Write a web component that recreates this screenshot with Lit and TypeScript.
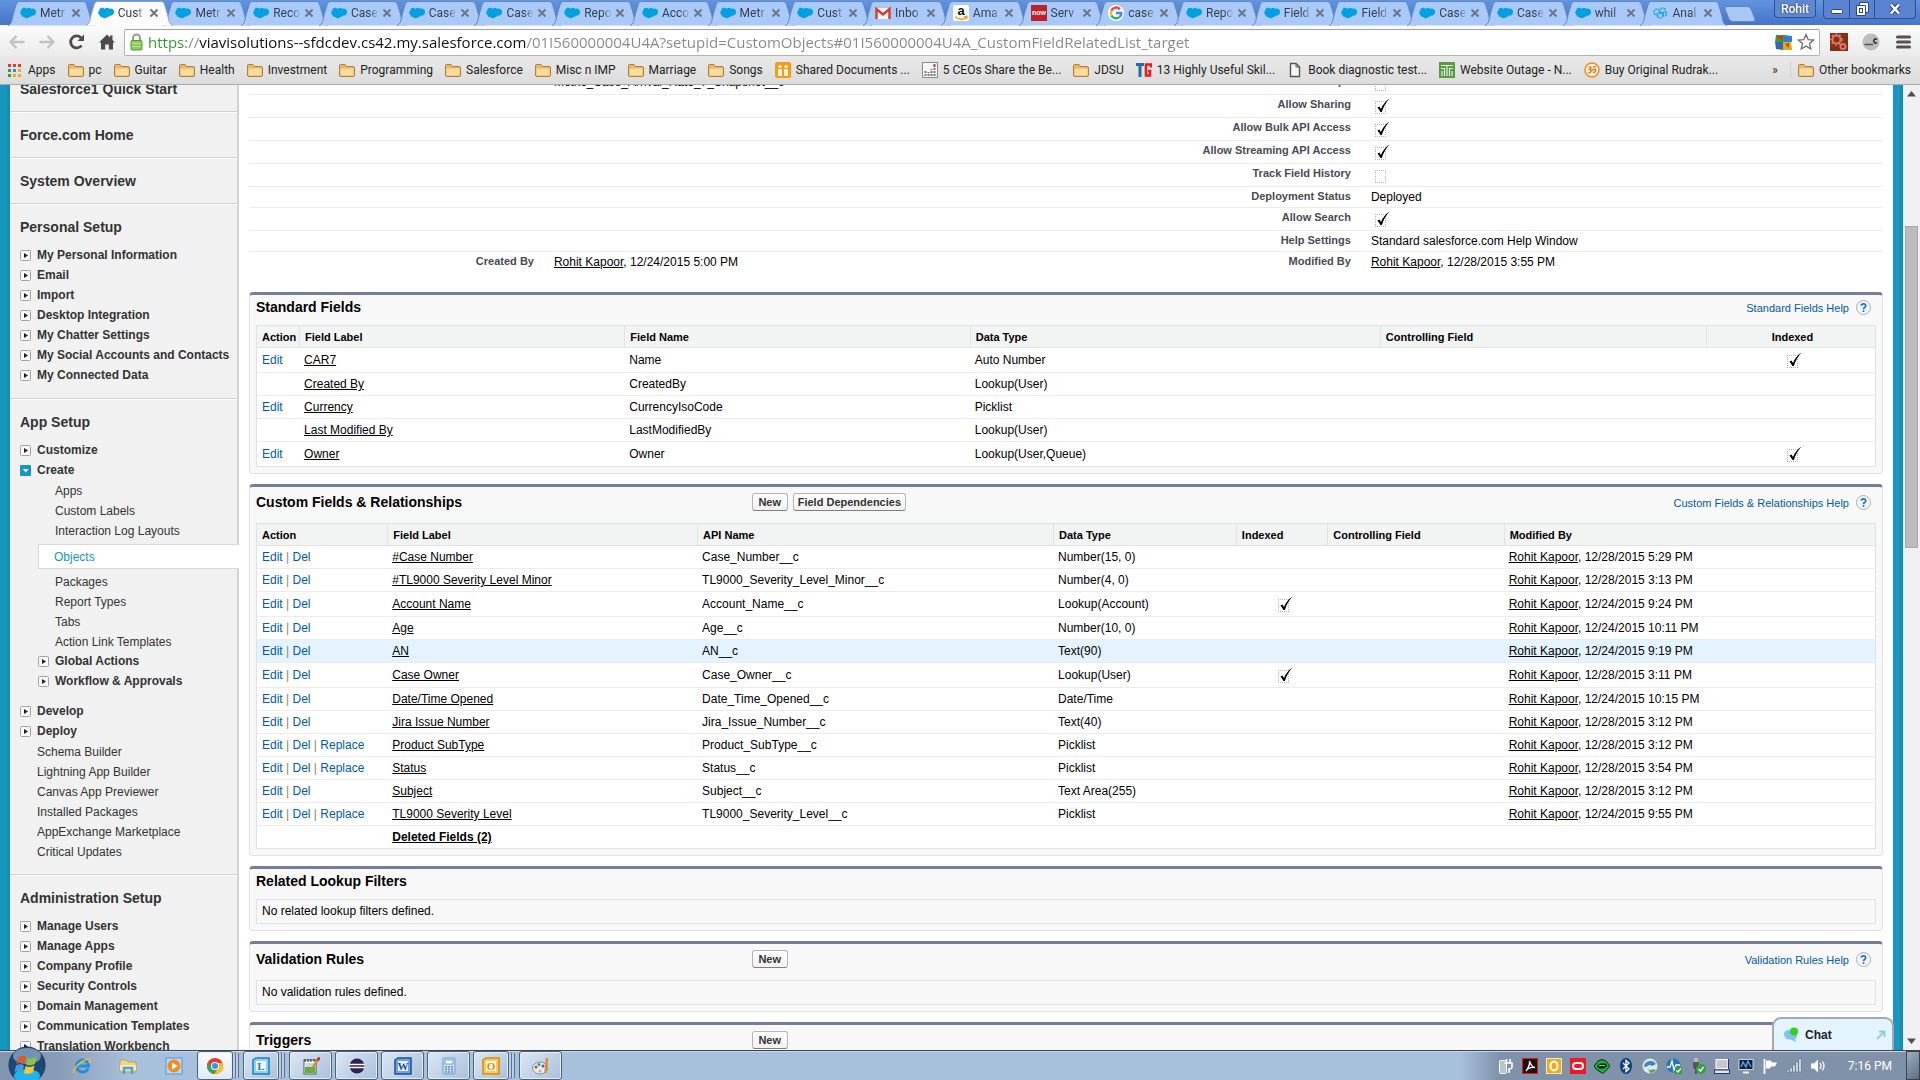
import { LitElement, html, svg, css, nothing, TemplateResult } from "lit";
import { customElement } from "lit/decorators.js";
import { classMap } from "lit/directives/class-map.js";

type Icon = TemplateResult;

const icon = (body: unknown, size = 16, box = 16): Icon =>
  html`<svg class="icon" width=${size} height=${size} viewBox="0 0 ${box} ${box}" aria-hidden="true">${body}</svg>`;

/* ---------- favicons ---------- */
const cloud = icon(svg`<path fill="#00a1e0" d="M6.6 3.9A3 3 0 0 1 11 3.800A3.500 3.500 0 0 1 16 7.200A3.500 3.500 0 0 1 12 10.600A2.700 2.700 0 0 1 9.200 11.900A3 3 0 0 1 4.200 12A2.700 2.700 0 0 1 1.300 9.800A2.800 2.800 0 0 1 1.200 5.700A3 3 0 0 1 6.600 3.900Z"/>`);
const gmail = icon(svg`<rect x="1" y="3" width="14" height="11" fill="#f4f4f4"/><path d="M1.500 14V4L8 9.500 14.500 4V14" fill="none" stroke="#d8392b" stroke-width="2.400"/>`);
const amazon = icon(svg`<rect width="16" height="16" rx="2" fill="#fff"/><text x="8" y="10" text-anchor="middle" font-family="Liberation Sans, sans-serif" font-weight="700" font-size="13" fill="#111">a</text><path d="M2 11.500C6 15 10 15 13 12.500M11 12l3-.5-.7 2.800" fill="none" stroke="#f79a1e" stroke-width="1.500"/>`);
const now = icon(svg`<rect width="16" height="16" fill="#c1202b"/><text x="8" y="10" text-anchor="middle" font-family="Liberation Sans, sans-serif" font-weight="700" font-size="7" fill="#fff">now</text>`);
const google = icon(svg`<circle cx="8" cy="8" r="8" fill="#fff"/><g fill="none" stroke-width="2.300"><path d="M12 4.200A5.300 5.300 0 0 0 3.300 5.700" stroke="#ea4335"/><path d="M3.300 5.700A5.300 5.300 0 0 0 3.400 10.600" stroke="#fbbc05"/><path d="M3.400 10.600A5.300 5.300 0 0 0 11.800 11.800" stroke="#34a853"/><path d="M11.800 11.800A5 5 0 0 0 13.300 8H8" stroke="#4285f4"/></g>`);
const flake = icon(svg`<g fill="none" stroke="#1aa6e0" stroke-width="1.500" stroke-dasharray="2 1"><circle cx="5" cy="7" r="3"/><circle cx="10.500" cy="6" r="3"/><circle cx="8" cy="10" r="3"/><circle cx="12.500" cy="9" r="2"/></g>`);

/* ---------- bookmark icons ---------- */
const folder = icon(svg`<path d="M.5 3.500Q.5 2.500 1.500 2.500H6L7.500 4.500H14Q15.500 4.500 15.500 6V13Q15.500 14.500 14 14.500H2Q.5 14.500.5 13Z" fill="#e9b765" stroke="#a8803f"/><path d="M1.500 6.500H14.500V13Q14.500 13.500 14 13.500H2Q1.500 13.500 1.500 13Z" fill="#fbdc9c"/>`);
const apps = icon(svg`<g><path fill="#e43b2c" d="M1 2h3v3H1zM6 2h3v3H6zM11 2h3v3h-3z"/><path fill="#2aa053" d="M1 7h3v3H1zM1 12h3v3H1z"/><path fill="#2a8fe0" d="M6 7h3v3H6z"/><path fill="#f5a81c" d="M11 7h3v3h-3zM6 12h3v3H6zM11 12h3v3h-3z"/></g>`);
const shared = icon(svg`<rect width="16" height="16" rx="2" fill="#f59b16"/><path d="M3 7h4v7H3zM9 7h4v7H9z" fill="#fff3d8"/><circle cx="5" cy="4.500" r="1.700" fill="#fff3d8"/><circle cx="11" cy="4.500" r="1.700" fill="#fff3d8"/>`);
const chart = icon(svg`<rect x=".5" y=".5" width="15" height="15" fill="#f6f6f6" stroke="#8a8a8a"/><path d="M3.500 14V9M6.500 14V10M9.500 14V7M12.500 14V5" stroke="#777" stroke-width="2" stroke-dasharray="2 1"/><path d="M11.500 2h2v3h-2z" fill="#c33"/>`);
const tg = icon(svg`<path d="M0 1H8V4H5.500V15H2.500V4H0Z" fill="#1d6fa5"/><path d="M15 5.500V2.500H10V13.500H14V9H12" fill="none" stroke="#e11d22" stroke-width="2.600"/>`);
const page = icon(svg`<path d="M3.500 1.500H9L12.500 5V14.500H3.500Z" fill="#f5f5f5" stroke="#555" stroke-width="1.400"/><path d="M9 1.500V5H12.500" fill="none" stroke="#555"/>`);
const outage = icon(svg`<rect width="16" height="16" fill="#5a9a45"/><path d="M2 3.500H14M8 3.500V14M5.500 14V6.500H2M10.500 14V6.500H14M3 14V9M13 14V9" fill="none" stroke="#e4f1dd" stroke-width="1.200"/>`);
const om = icon(svg`<circle cx="8" cy="8" r="7" fill="#fff4e2" stroke="#ee8b20" stroke-width="1.500"/><path d="M4.500 5.500C7 4 8 6.500 5.800 7.500C8.500 8 7 11.500 4.200 10.500M7.500 8.500C9.500 8 10 6.500 11.500 7.500C12.500 9.500 10.500 11 9.200 10M9 4.500C10 5.500 11 5.200 11.800 4.300" fill="none" stroke="#e8791a" stroke-width="1.400"/>`);

/* ---------- shared glyphs ---------- */
const closeGlyph = icon(svg`<path d="M1.500 1.500L8.500 8.500M8.500 1.500L1.500 8.500" stroke="#6c7686" stroke-width="2"/>`, 10, 10);
const tick = svg`<path d="M2.500 9.500L4.500 8.500L6 11C7.500 7 10 3.500 14.500 .500C11 4.500 8.500 8.500 6.800 14H5.500Z" fill="#000"/>`;

const tabs: [string, Icon][] = [
  ["Metr", cloud], ["Cust", cloud], ["Metr", cloud], ["Reco", cloud], ["Case", cloud], ["Case", cloud],
  ["Case", cloud], ["Repo", cloud], ["Acco", cloud], ["Metr", cloud], ["Cust", cloud], ["Inbo", gmail],
  ["Ama", amazon], ["Serv", now], ["case", google], ["Repo", cloud], ["Field", cloud], ["Field", cloud],
  ["Case", cloud], ["Case", cloud], ["whil", cloud], ["Anal", flake],
];

const bookmarks: [string, Icon][] = [
  ["Apps", apps], ["pc", folder], ["Guitar", folder], ["Health", folder], ["Investment", folder],
  ["Programming", folder], ["Salesforce", folder], ["Misc n IMP", folder], ["Marriage", folder], ["Songs", folder],
  ["Shared Documents ...", shared], ["5 CEOs Share the Be...", chart], ["JDSU", folder],
  ["13 Highly Useful Skil...", tg], ["Book diagnostic test...", page], ["Website Outage - N...", outage],
  ["Buy Original Rudrak...", om],
];

@customElement("browser-chrome")
class BrowserChrome extends LitElement {
  static styles = css`
    :host { display: block; font: 12px/16px Roboto, "Open Sans", sans-serif; color: #222; }
    .icon { display: block; flex: none; }
    button { font: inherit; color: inherit; border: 0; padding: 0; background: none; }
    .strip { display: flex; height: 25px; padding: 0 4px 0 8px; background: linear-gradient(#6394df, #4574cb); }
    .tabs { display: flex; flex: 1; min-width: 0; }
    .tab { flex: 1; min-width: 0; display: grid; }
    .tab > * { grid-area: 1 / 1; }
    .tab.active { z-index: 1; }
    .shape { width: calc(100% + 9px); height: 25px; overflow: visible; }
    .shape path { fill: #a9caf8; stroke: #5f86bd; stroke-width: 1px; vector-effect: non-scaling-stroke; }
    .active .shape path { fill: #fbfbfb; stroke: #8aa0c4; }
    .inner { display: flex; align-items: center; padding: 1px 0 0 12px; min-width: 0; z-index: 1; }
    .name { width: 28px; margin: 0 3px 0 4px; white-space: nowrap; color: #333f52;
      mask-image: linear-gradient(90deg, #000 65%, transparent); }
    .plus { width: 32px; height: 17px; margin: 5px 18px 0 6px; }
    .plus svg { display: block; }
    .user { height: 18px; width: 42px; margin-right: 7px; border: 1px solid #2d4f93; border-top: 0; border-radius: 0 0 4px 4px;
      background: #5f88d3; color: #fff; font-weight: 500; text-shadow: 0 0 2px #123; }
    .controls { display: flex; height: 18px; border: 1px solid #2d4f93; border-top: 0; border-radius: 0 0 4px 4px; background: #5a84d2; }
    .controls button { width: 25px; display: grid; place-items: center; }
    .controls button + button { border-left: 1px solid #2d4f93; }
    .controls button:last-child { width: 41px; }
    .toolbar { display: flex; align-items: center; box-sizing: border-box; height: 31px; padding: 3px 8px 0 8px; background: linear-gradient(#fcfcfc, #ebebeb); }
    .nav { display: flex; gap: 12px; padding-right: 8px; }
    .nav button, .extras button { width: 18px; height: 18px; }
    .omni { flex: 1; display: flex; align-items: center; height: 25px; padding: 0 4px 0 5px; gap: 5px;
      border: 1px solid #b3b3b3; border-top-color: #a0a0a0; border-radius: 2px; background: #fff; }
    .url { flex: 1; min-width: 0; border: 0; outline: 0; padding: 0; font: 15px/22px "Open Sans", "Noto Sans", sans-serif;
      background: linear-gradient(90deg, #2a9b2a 0 38px, #8a8a8a 38px 51px, #111 51px 378px, #888 378px);
      -webkit-background-clip: text; background-clip: text; color: transparent; }
    .extras { display: flex; gap: 14px; padding-left: 10px; }
    .marks { display: flex; align-items: center; height: 28px; padding: 0 9px 0 7px; gap: 12px;
      background: linear-gradient(#e9e9e9, #dcdcdc); border-bottom: 1px solid #a9a9a9; white-space: nowrap; overflow: hidden; }
    .mark { display: flex; align-items: center; gap: 5px; color: inherit; text-decoration: none; }
    .more { margin-left: auto; }
    .other { border-left: 1px solid #cfcfcf; padding-left: 7px; }
  `;

  private shape = html`<svg class="shape" viewBox="0 0 90 25" preserveAspectRatio="none" aria-hidden="true">
    <path d="M0 25.500C4 24 4 20 5.500 14L8 6C9 2.500 10 1.500 13 1.500H77C80 1.500 81 2.500 82 6L84.500 14C86 20 86 24 90 25.500"/></svg>`;

  render() {
    return html`
      <div class="strip">
        <div class="tabs" role="tablist">
          ${tabs.map(([name, favicon], i) => html`
            <div class=${classMap({ tab: true, active: i === 1 })} role="tab" aria-selected=${i === 1}>
              ${this.shape}
              <div class="inner">${favicon}<span class="name">${name}</span>
                <button aria-label="Close tab">${closeGlyph}</button></div>
            </div>`)}
        </div>
        <button class="plus" aria-label="New tab"><svg width="32" height="16" viewBox="0 0 32 16"><path d="M3 .5H23Q26 .5 27 3L31 13Q31.500 15.500 29 15.500H9Q6 15.500 5 13L1 3Q.5.5 3 .5Z" fill="#a9c8f5" stroke="#5f86bd"/></svg></button>
        <button class="user">Rohit</button>
        <div class="controls">
          <button aria-label="Minimize"><svg width="14" height="14"><rect x="1.500" y="7.500" width="11" height="4" rx="1" fill="#fff" stroke="#2b4679"/></svg></button>
          <button aria-label="Restore"><svg width="14" height="14" fill="none" stroke="#2b4679"><path d="M4.500.500H13.500V10.500H10.500V13.500H1.500V3.500H4.500Z" fill="#fff"/><path d="M4.500 3.500H10.500V10.500"/><rect x="4.500" y="6.500" width="3" height="4"/></svg></button>
          <button aria-label="Close"><svg width="14" height="14"><path d="M3 2.500L11 11.500M11 2.500L3 11.500" stroke="#2b4679" stroke-width="4.500"/><path d="M3 2.500L11 11.500M11 2.500L3 11.500" stroke="#fff" stroke-width="2.500"/></svg></button>
        </div>
      </div>
      <div class="toolbar">
        <div class="nav">
          <button aria-label="Back">${icon(svg`<path d="M16.500 9H3M8.500 3L2.500 9L8.500 15" fill="none" stroke="#c2c2c2" stroke-width="2.400"/>`, 18, 18)}</button>
          <button aria-label="Forward">${icon(svg`<path d="M1.500 9H15M9.500 3L15.500 9L9.500 15" fill="none" stroke="#c2c2c2" stroke-width="2.400"/>`, 18, 18)}</button>
          <button aria-label="Reload">${icon(svg`<path d="M13.500 12.500A6 6 0 1 1 13 4.800" fill="none" stroke="#4f4a4c" stroke-width="2.800"/><path d="M16 1.500V8H9.500Z" fill="#4f4a4c"/>`, 18, 18)}</button>
          <button aria-label="Home">${icon(svg`<path d="M9 1.500L1 9.500H3V16.500H7.200V11.500H10.800V16.500H15V9.500H17L14.500 7V2.500H12V4.500Z" fill="#4f4a4c"/>`, 18, 18)}</button>
        </div>
        <div class="omni">
          <svg class="icon" width="13" height="18" viewBox="0 0 13 18" aria-hidden="true"><path d="M3 8V5A3.500 3.500 0 0 1 10 5V8" fill="none" stroke="#9a9a9a" stroke-width="2"/><rect x="1" y="7.500" width="11" height="9.500" rx="1" fill="#8ecb5c" stroke="#4f9a3a"/><path d="M2 10.500H11M2 13.500H11" stroke="#b6e392"/></svg>
          <input class="url" aria-label="Address" value="https://viavisolutions--sfdcdev.cs42.my.salesforce.com/01I560000004U4A?setupid=CustomObjects#01I560000004U4A_CustomFieldRelatedList_target">
          ${icon(svg`<path d="M1 1H9V8H0Z" fill="#3a9c3a"/><path d="M9 1L17 2V8H9Z" fill="#2e83c7"/><path d="M0 8H8V16L1 15Z" fill="#3766b5"/><path d="M8 8H16L17 16H8Z" fill="#e2a81e"/><path d="M2 2H8V6L2 4Z" fill="#d6322a"/><path d="M10 10L14 9V14Z" fill="#cf4023"/>`, 17, 17)}
          ${icon(svg`<path d="M9 1.500L11.200 6.600L16.700 7L12.500 10.600L13.800 16L9 13.100L4.200 16L5.500 10.600L1.300 7L6.800 6.600Z" fill="#fff" stroke="#6e6e6e" stroke-width="1.300"/>`, 18, 18)}
        </div>
        <div class="extras">
          <button aria-label="Gears extension">${icon(svg`<rect width="18" height="18" fill="#7d3413"/><g fill="none" stroke="#e8746a"><circle cx="6.500" cy="6.500" r="4" stroke-width="2"/><circle cx="6.500" cy="6.500" r="5.500" stroke-width="1.500" stroke-dasharray="2 2"/><circle cx="13" cy="13.500" r="2.500" stroke-width="2"/></g>`, 18, 18)}</button>
          <button aria-label="Extension">${icon(svg`<circle cx="9" cy="9" r="8.500" fill="#bdbdbd"/><path d="M2.500 11.500H11" stroke="#555" stroke-width="1.500"/><path d="M15 6.500A2 2 0 1 0 15 9.500" fill="none" stroke="#333" stroke-width="1.500"/>`, 18, 18)}</button>
          <button aria-label="Menu">${icon(svg`<path d="M3.500 4H15.500M3.500 9H15.500M3.500 14H15.500" stroke="#554f51" stroke-width="3" stroke-linecap="round"/>`, 18, 18)}</button>
        </div>
      </div>
      <nav class="marks">
        ${bookmarks.map(([name, ic]) => html`<a class="mark" href="#">${ic}${name}</a>`)}
        <span class="more">»</span>
        <a class="mark other" href="#">${folder}Other bookmarks</a>
      </nav>`;
  }
}

/* ---------- setup sidebar ---------- */
type Kind = "closed" | "open" | "leaf" | "sub" | "selected" | "subclosed";
interface Section { title: string; items?: [string, Kind, boolean?][]; }

const sections: Section[] = [
  { title: "Salesforce1 Quick Start" },
  { title: "Force.com Home" },
  { title: "System Overview" },
  { title: "Personal Setup", items: [
    ["My Personal Information", "closed"], ["Email", "closed"], ["Import", "closed"], ["Desktop Integration", "closed"],
    ["My Chatter Settings", "closed"], ["My Social Accounts and Contacts", "closed"], ["My Connected Data", "closed"]] },
  { title: "App Setup", items: [
    ["Customize", "closed"], ["Create", "open"], ["Apps", "sub"], ["Custom Labels", "sub"], ["Interaction Log Layouts", "sub"],
    ["Objects", "selected"], ["Packages", "sub"], ["Report Types", "sub"], ["Tabs", "sub"], ["Action Link Templates", "sub"],
    ["Global Actions", "subclosed"], ["Workflow & Approvals", "subclosed"], ["Develop", "closed", true], ["Deploy", "closed"],
    ["Schema Builder", "leaf"], ["Lightning App Builder", "leaf"], ["Canvas App Previewer", "leaf"],
    ["Installed Packages", "leaf"], ["AppExchange Marketplace", "leaf"], ["Critical Updates", "leaf"]] },
  { title: "Administration Setup", items: [
    ["Manage Users", "closed"], ["Manage Apps", "closed"], ["Company Profile", "closed"], ["Security Controls", "closed"],
    ["Domain Management", "closed"], ["Communication Templates", "closed"], ["Translation Workbench", "closed"]] },
];

@customElement("setup-sidebar")
class SetupSidebar extends LitElement {
  static styles = css`
    :host { display: block; box-sizing: border-box; background: #f1f1f1; border-right: 2px solid #d2d2d2; color: #333; }
    .tree { margin-top: -19px; }
    .section { padding: 13px 0 13px 10px; border-top: 1px solid #fff; border-bottom: 1px solid #d0d0d0; }
    .title { margin: 0; font-size: 14px; line-height: 18px; font-weight: 700; }
    .list { list-style: none; margin: 9px 0 0; padding: 0; }
    .item { display: flex; align-items: center; gap: 6px; height: 20px; line-height: 20px; font-weight: 700; white-space: nowrap; }
    .item a { color: inherit; text-decoration: none; }
    .spaced { margin-top: 10px; }
    .leaf, .sub { box-sizing: border-box; padding-top: 1px; font-weight: 400; }
    .leaf { padding-left: 17px; }
    .sub { padding-left: 35px; }
    .subclosed { padding-left: 18px; }
    .selected { margin: 4px -2px 2px 18px; height: 23px; padding-left: 15px; background: #fff; color: #1797c0; font-weight: 400;
      border: solid #d8d8d8; border-width: 1px 0 1px 1px; }
    .toggle { display: block; width: 11px; height: 11px; padding: 0; border: 0; background: none; }
    .toggle svg { display: block; }
  `;

  private toggle(open: boolean) {
    return html`<button class="toggle" aria-label=${open ? "Collapse" : "Expand"}><svg width="11" height="11" viewBox="0 0 11 11">
      ${open
        ? svg`<rect width="11" height="11" rx="1" fill="#1797c0"/><path d="M3 4H8.500L5.750 7.500Z" fill="#fff"/>`
        : svg`<rect x=".5" y=".5" width="10" height="10" rx="1" fill="#f8f8f8" stroke="#a3a3a3"/><path d="M4 3L8 5.500L4 8Z" fill="#222"/>`}
    </svg></button>`;
  }

  render() {
    return html`<nav class="tree">${sections.map((s) => html`
      <div class="section">
        <h2 class="title">${s.title}</h2>
        ${s.items ? html`<ul class="list">${s.items.map(([name, kind, spaced]) => html`
          <li class=${classMap({ item: true, [kind]: true, spaced: !!spaced })}>
            ${kind === "open" ? this.toggle(true) : kind.endsWith("closed") ? this.toggle(false) : nothing}
            <a href="#">${name}</a></li>`)}</ul>` : nothing}
      </div>`)}</nav>`;
  }
}

/* ---------- object detail ---------- */
interface Detail { label?: string; value?: string; person?: boolean; label2: string; value2?: string; check?: boolean; }

const details: Detail[] = [
  { value: "Metric_Case_Arrival_Rate_7_Snapshot__c", label2: "Allow in Chatter Groups", check: false },
  { label2: "Allow Sharing", check: true },
  { label2: "Allow Bulk API Access", check: true },
  { label2: "Allow Streaming API Access", check: true },
  { label2: "Track Field History", check: false },
  { label2: "Deployment Status", value2: "Deployed" },
  { label2: "Allow Search", check: true },
  { label2: "Help Settings", value2: "Standard salesforce.com Help Window" },
  { label: "Created By", value: "12/24/2015 5:00 PM", person: true, label2: "Modified By", value2: "12/28/2015 3:55 PM" },
];

const standard: [boolean, string, string, string, boolean][] = [
  [true, "CAR7", "Name", "Auto Number", true],
  [false, "Created By", "CreatedBy", "Lookup(User)", false],
  [true, "Currency", "CurrencyIsoCode", "Picklist", false],
  [false, "Last Modified By", "LastModifiedBy", "Lookup(User)", false],
  [true, "Owner", "Owner", "Lookup(User,Queue)", true],
];

const custom: [string, string, string, string][] = [
  ["#Case Number", "Case_Number__c", "Number(15, 0)", "12/28/2015 5:29 PM"],
  ["#TL9000 Severity Level Minor", "TL9000_Severity_Level_Minor__c", "Number(4, 0)", "12/28/2015 3:13 PM"],
  ["Account Name", "Account_Name__c", "Lookup(Account)", "12/24/2015 9:24 PM"],
  ["Age", "Age__c", "Number(10, 0)", "12/24/2015 10:11 PM"],
  ["AN", "AN__c", "Text(90)", "12/24/2015 9:19 PM"],
  ["Case Owner", "Case_Owner__c", "Lookup(User)", "12/28/2015 3:11 PM"],
  ["Date/Time Opened", "Date_Time_Opened__c", "Date/Time", "12/24/2015 10:15 PM"],
  ["Jira Issue Number", "Jira_Issue_Number__c", "Text(40)", "12/28/2015 3:12 PM"],
  ["Product SubType", "Product_SubType__c", "Picklist", "12/28/2015 3:12 PM"],
  ["Status", "Status__c", "Picklist", "12/28/2015 3:54 PM"],
  ["Subject", "Subject__c", "Text Area(255)", "12/28/2015 3:12 PM"],
  ["TL9000 Severity Level", "TL9000_Severity_Level__c", "Picklist", "12/24/2015 9:55 PM"],
];

@customElement("object-detail")
class ObjectDetail extends LitElement {
  static styles = css`
    :host { display: block; box-sizing: border-box; padding: 0 10px; background: #fff; color: #000; }
    table { width: 100%; border-spacing: 0; table-layout: fixed; }
    th, td { padding: 0; text-align: left; white-space: nowrap; box-sizing: border-box; }
    .link { color: inherit; }
    .action { color: #015ba7; text-decoration: none; }
    .bar { color: #8a8a6a; }
    .detail { margin: -13px 0 19px; }
    .detail th, .detail td { height: 21px; vertical-align: top; border-bottom: 1px solid #ececec; padding-top: 2px; line-height: 16px; }
    .detail .checked > * { height: 23px; }
    .detail tr:last-child > * { border-bottom: 0; }
    .detail .lbl { width: 17.500%; padding-right: 1px; padding-top: 1px; text-align: right; font-size: 11px; color: #4a4a56; }
    .detail .val { padding-left: 19px; }
    .check { display: inline-grid; width: 18px; height: 18px; vertical-align: top; }
    .check > * { grid-area: 1 / 1; }
    .check input { appearance: none; width: 11px; height: 13px; margin: 4px 0 0 4px; border: 1px dotted #b4b4b4; }
    .check svg { margin: 1px 0 0 4px; }
    .panel { margin-bottom: 10px; padding: 0 6px 6px; background: #f8f8f8; border: 1px solid #e0e3e5; border-top: 3px solid #747e96; border-radius: 4px; }
    .head { display: grid; grid-template-columns: 30.600% auto 1fr; align-items: center; height: 30px; }
    .head.tall { height: 36px; }
    .head h3 { margin: 0; font-size: 14px; line-height: 18px; padding-bottom: 6px; }
    .buttons { display: flex; gap: 5px; padding-bottom: 6px; }
    .buttons button { min-width: 36px; height: 18px; padding: 0 4px; font: 700 11px/14px "Liberation Sans", Arial, sans-serif; color: #333;
      border: 1px solid #b5b5b5; border-bottom-color: #7f7f7f; border-radius: 3px; background: linear-gradient(#fff, #f1f1f1); }
    .help { grid-column: 3; display: flex; justify-content: flex-end; align-items: center; gap: 7px; padding: 0 5px 5px 0; color: #015ba7; text-decoration: none; font-size: 11px; }
    .grid { background: #fff; border: 1px solid #e0e3e5; }
    .grid th { height: 22px; padding: 0 5px; font-size: 11px; background: #f2f3f3; border-bottom: 1px solid #e0e3e5; border-left: 1px solid #e0e3e5; }
    .grid td { height: 23px; line-height: 16px; padding: 0 5px; border-bottom: 1px solid #ececec; }
    .grid th:first-child { border-left: 0; }
    .grid tr.ticked td { height: 25px; }
    .grid tbody tr:last-child td { height: 22px; border-bottom: 0; }
    .grid tbody tr.ticked:last-child td { height: 24px; }
    .grid tr.hover td { background: #e3f3ff; }
    .grid .center { text-align: center; padding-left: 8px; }
    .c-act { width: 2.600%; } .c-lbl { width: 20.100%; } .c-name { width: 21.350%; } .c-type { width: 25.350%; } .c-ctl { width: 20.150%; }
    .k-act { width: 8.050%; } .k-lbl { width: 19.150%; } .k-api { width: 22%; } .k-type { width: 11.300%; } .k-idx { width: 5.650%; } .k-ctl { width: 10.900%; }
    .empty { border: 1px solid #e0e3e5; padding: 3px 5px 4px; line-height: 16px; }
  `;

  private check(on: boolean, label: string) {
    return html`<span class="check"><input type="checkbox" disabled ?checked=${on} aria-label=${label}>
      ${on ? html`<svg width="15" height="15" viewBox="0 0 15 15" aria-hidden="true">${tick}</svg>` : nothing}</span>`;
  }

  private person(when: string) { return html`<a class="link" href="#">Rohit Kapoor</a>, ${when}`; }

  private head(title: string, buttons: string[] = [], help = false) {
    return html`<div class=${classMap({ head: true, tall: buttons.length > 0 })}>
      <h3>${title}</h3>
      <div class="buttons">${buttons.map((b) => html`<button>${b}</button>`)}</div>
      ${help ? html`<a class="help" href="#">${title} Help
        <svg width="15" height="15" viewBox="0 0 15 15" aria-hidden="true"><circle cx="7.500" cy="7.500" r="7" fill="#f4f7fa" stroke="#a8b0b8"/><path d="M5.300 5.800C5.300 3.200 9.700 3.200 9.700 5.700C9.700 7.300 7.500 7.200 7.500 9.200M7.500 10.300V12" fill="none" stroke="#1a74c4" stroke-width="1.700"/></svg></a>` : nothing}
    </div>`;
  }

  render() {
    return html`
      <table class="detail"><tbody>${details.map((d) => html`<tr class=${d.check !== undefined ? "checked" : ""}>
        <th class="lbl">${d.label ?? ""}</th>
        <td class="val">${d.person ? this.person(d.value!) : d.value ?? ""}</td>
        <th class="lbl">${d.label2}</th>
        <td class="val">${d.check !== undefined ? this.check(d.check, d.label2) : d.person ? this.person(d.value2!) : d.value2}</td>
      </tr>`)}</tbody></table>

      <section class="panel">${this.head("Standard Fields", [], true)}
        <table class="grid"><thead><tr>
          <th class="c-act">Action</th><th class="c-lbl">Field Label</th><th class="c-name">Field Name</th>
          <th class="c-type">Data Type</th><th class="c-ctl">Controlling Field</th><th class="center">Indexed</th></tr></thead>
          <tbody>${standard.map(([edit, label, name, type, idx]) => html`<tr class=${idx ? "ticked" : ""}>
            <td>${edit ? html`<a class="action" href="#">Edit</a>` : nothing}</td>
            <td><a class="link" href="#">${label}</a></td><td>${name}</td><td>${type}</td><td></td>
            <td class="center">${idx ? this.check(true, "Indexed") : nothing}</td></tr>`)}</tbody></table>
      </section>

      <section class="panel">${this.head("Custom Fields & Relationships", ["New", "Field Dependencies"], true)}
        <table class="grid"><thead><tr>
          <th class="k-act">Action</th><th class="k-lbl">Field Label</th><th class="k-api">API Name</th><th class="k-type">Data Type</th>
          <th class="k-idx">Indexed</th><th class="k-ctl">Controlling Field</th><th>Modified By</th></tr></thead>
          <tbody>${custom.map(([label, api, type, when]) => {
            const idx = type.startsWith("Lookup");
            const replace = type === "Picklist";
            return html`<tr class=${classMap({ ticked: idx, hover: label === "AN" })}>
              <td><a class="action" href="#">Edit</a><span class="bar"> | </span><a class="action" href="#">Del</a>${replace ? html`<span class="bar"> | </span><a class="action" href="#">Replace</a>` : nothing}</td>
              <td><a class="link" href="#">${label}</a></td><td>${api}</td><td>${type}</td>
              <td class="center">${idx ? this.check(true, "Indexed") : nothing}</td><td></td><td>${this.person(when)}</td></tr>`;
          })}
          <tr><td></td><td><a class="link" href="#"><b>Deleted Fields (2)</b></a></td><td></td><td></td><td></td><td></td><td></td></tr>
          </tbody></table>
      </section>

      <section class="panel">${this.head("Related Lookup Filters")}<div class="empty">No related lookup filters defined.</div></section>
      <section class="panel">${this.head("Validation Rules", ["New"], true)}<div class="empty">No validation rules defined.</div></section>
      <section class="panel">${this.head("Triggers", ["New"])}</section>`;
  }
}

/* ---------- Windows taskbar ---------- */
const docIcon = (letter: string, fill: string, edge: string) =>
  icon(svg`<path d="M1 3L4 1H17V17H1Z" fill="${fill}" stroke="${edge}" stroke-width="1.500"/><rect x="4" y="4" width="10" height="10" fill="#fff" opacity=".85"/><text x="9" y="13" text-anchor="middle" font-family="Liberation Serif, serif" font-weight="700" font-size="11" fill="${edge}">${letter}</text>`, 18, 18);

const ie = icon(svg`<path d="M15 11.500A6 6 0 1 1 15.500 9H5" fill="none" stroke="#1f8fe0" stroke-width="3"/><path d="M1 16C-1 12 10 1.500 17 2C18 3 17 5 16 6" fill="none" stroke="#f2bb2c" stroke-width="1.600"/>`, 18, 18);
const explorer = icon(svg`<path d="M1 3H8L9 5H17V15H1Z" fill="#f3d683" stroke="#c9a04a"/><path d="M1 8H17V13H1Z" fill="#fbeab0"/><path d="M5 17V11H13V17" fill="none" stroke="#4aa3df" stroke-width="2.500"/>`, 18, 18);
const wmp = icon(svg`<rect x="1" y="1" width="16" height="16" fill="#b9d8f2" stroke="#4f9ad6"/><circle cx="9" cy="9" r="6.500" fill="#f68b1e"/><path d="M7 5.500L12.500 9L7 12.500Z" fill="#fff"/>`, 18, 18);
const chrome = icon(svg`<circle cx="9" cy="9" r="8" fill="#e33b2e"/><path d="M2 5A8 8 0 0 0 8.500 17L12 11L6 11Z" fill="#3aa757"/><path d="M16.500 6A8 8 0 0 1 8.500 17L12.500 10L10 6Z" fill="#fbc116"/><circle cx="9" cy="9" r="4" fill="#fff"/><circle cx="9" cy="9" r="3" fill="#4688f1"/>`, 18, 18);
const notepad = icon(svg`<rect x="2" y="3" width="12" height="14" fill="#fff" stroke="#4c5a4c"/><path d="M3 2V5M6 2V5M9 2V5M12 2V5" stroke="#333"/><path d="M4 7H12M4 9H12" stroke="#9ab"/><rect x="3" y="10" width="10" height="6" fill="#59b33d"/><path d="M17 1L9 13" stroke="#c98b1e" stroke-width="2.200"/><path d="M17.500.5L15.500 3.500" stroke="#c22" stroke-width="2.400"/>`, 18, 18);
const eclipse = icon(svg`<circle cx="9" cy="9" r="7.500" fill="#2c2255"/><path d="M1 7.500H17M1 10.500H17" stroke="#fff" stroke-width="1.300"/>`, 18, 18);
const calc = icon(svg`<rect x="3" y="1" width="12" height="16" rx="1" fill="#c9dff4" stroke="#6f9cc8"/><rect x="5" y="3" width="8" height="4" fill="#fff" stroke="#7aa2ca"/><path d="M5 10H13M5 12.500H13M5 15H13" stroke="#5a8cc0" stroke-width="1.500" stroke-dasharray="2 1"/>`, 18, 18);
const paint = icon(svg`<ellipse cx="8" cy="11" rx="7.500" ry="6" fill="#e3edf5" stroke="#7895ae"/><circle cx="4" cy="10" r="1.500" fill="#d33"/><circle cx="7" cy="7.500" r="1.500" fill="#3a3"/><circle cx="11" cy="9" r="1.500" fill="#36c"/><circle cx="8" cy="14" r="1.500" fill="#e9b21c"/><path d="M15 1L13.500 16" stroke="#e58a1f" stroke-width="2.500"/>`, 18, 18);

const tray: Icon[] = [
  icon(svg`<rect x="1.500" y="2.500" width="7" height="13" rx="1" fill="#b9c4d3" stroke="#fff"/><path d="M6.500 5H14V9Q14 11 11 11V15M8.500 1V5M12 1V5" fill="none" stroke="#fff" stroke-width="1.600"/>`),
  icon(svg`<rect x=".5" y=".5" width="15" height="15" fill="#1c0f0f" stroke="#d8191f"/><path d="M4 13C7 9 8 6 7.500 3C9 8 11 9.500 13 9.500C9 9 6 10 4 13" fill="none" stroke="#fff" stroke-width="1.300"/>`),
  icon(svg`<rect x=".5" y=".5" width="15" height="15" fill="#f3a81b" stroke="#fff1c4"/><ellipse cx="8" cy="8" rx="3.500" ry="4.500" fill="none" stroke="#fff" stroke-width="2.200"/>`),
  icon(svg`<rect width="16" height="16" fill="#ea1b22"/><rect x="3" y="5" width="10" height="6" rx="3" fill="none" stroke="#fff" stroke-width="2"/>`),
  icon(svg`<path d="M0 8L4 3Q8 0 12 3L16 8L12 12.500L9 15.500L5 13Q2 12 0 8Z" fill="#1fae3a" stroke="#0b2a10"/><path d="M3 8L6 5.500H12L13 8L10 10.500H5Z" fill="#0b2a10"/><path d="M5 7.500H11" stroke="#7be08c"/>`),
  icon(svg`<ellipse cx="8" cy="8" rx="6" ry="8" fill="#0c3f86"/><path d="M5 5L11 11L8 13.500V2.500L11 5L5 11" fill="none" stroke="#fff" stroke-width="1.300"/>`),
  icon(svg`<circle cx="8" cy="8" r="7.500" fill="#dfe7ee"/><path d="M2 9A6.500 6.500 0 0 1 14 6L10 8A3 3 0 0 0 5 8.500Z" fill="#3b86b8"/><path d="M6 10A3 3 0 0 0 11 11L14 12A7 7 0 0 1 8 15Z" fill="#4fae50"/>`),
  icon(svg`<circle cx="7.500" cy="7.500" r="7" fill="#2476bd"/><path d="M1 9H4L6 3L8 12L10 7H14" fill="none" stroke="#fff" stroke-width="1.300"/><rect x="9" y="9" width="7" height="7" fill="#35a038"/><path d="M10.500 12.500L12 14L15 10.500" fill="none" stroke="#fff" stroke-width="1.300"/>`),
  icon(svg`<path d="M3 4H9V9Q9 11 7 11V16H5V11Q3 11 3 9Z" fill="#555"/><path d="M4 0H8V4H4Z" fill="#bbb"/><circle cx="11" cy="11" r="5" fill="#2fa534"/><path d="M8.500 11L10.500 13L13.500 9" fill="none" stroke="#fff" stroke-width="1.500"/>`),
  icon(svg`<rect x="2" y="1.500" width="12" height="9" fill="#c5c9cf" stroke="#fff"/><rect x=".5" y="12" width="15" height="3.500" fill="#e5e5e5" stroke="#27337a"/><path d="M14.500 1V11" stroke="#27337a"/>`),
  icon(svg`<rect x="1" y="1.500" width="14" height="10" fill="#0d1c33" stroke="#cfd6df"/><path d="M3 9L5 4L8 9L10 3L13 9" fill="none" stroke="#4ea1e8" stroke-width="1.500"/><path d="M5 14.500H11" stroke="#eee" stroke-width="2"/>`),
  icon(svg`<path d="M2.500 1V16" stroke="#fff" stroke-width="1.800"/><path d="M4 2.500H9L10 4.500H15L13 8.500H9L8 10.500H4Z" fill="#fff"/>`),
  icon(svg`<path d="M1 14V12H3V14ZM4 14V10H6V14ZM7 14V7H9V14ZM10 14V4H12V14ZM13 14V1H15V14Z" fill="#f4f6f9" stroke="#56657c" stroke-width=".5"/>`),
  icon(svg`<path d="M1 5.500H4L8 1.500V14.500L4 10.500H1Z" fill="#fff"/><path d="M10 5Q12 8 10 11M12.500 3.500Q15.500 8 12.500 12.500" fill="none" stroke="#fff" stroke-width="1.300"/>`),
];

@customElement("task-bar")
class TaskBar extends LitElement {
  static styles = css`
    :host { display: block; box-sizing: border-box; height: 30px; border-top: 1px solid #39424f;
      background: linear-gradient(90deg, #8194ae 0, #8a9db8 60px, #a7c0dc 130px, #a7c0dc 1460px, #8092aa 1500px); font: 12px/16px Roboto, "Open Sans", sans-serif; color: #fff; }
    .icon { display: block; }
    button { border: 0; padding: 0; background: none; display: grid; place-items: center; height: 29px; }
    .bar { display: flex; height: 29px; box-shadow: inset 0 1px 0 #c9d8ea; }
    .orb { width: 38px; margin: 0 13px 0 8px; z-index: 1; }
    .orb svg { margin-top: -5px; display: block; }
    .pin { width: 46px; }
    .apps { display: flex; gap: 3px; }
    .app { width: 43px; border: 1px solid #4d6280; border-radius: 3px; background: linear-gradient(135deg, #dbe7f4, #a9c0dc); box-shadow: inset 0 0 0 1px #e3edf8; }
    .app.front { background: linear-gradient(#fbfcfe, #dfe9f4); }
    .app.stack { width: 36px; margin-right: 7px; box-shadow: inset 0 0 0 1px #e3edf8, 3px 0 0 -1px #b9cde4, 4px 0 0 -1px #5c7190, 7px 0 0 -2px #b9cde4, 8px 0 0 -2px #5c7190; }
    .tray { margin-left: auto; display: flex; align-items: center; gap: 8px; }
    .clock { margin: 0 0 0 14px; }
    .desk { width: 14px; margin-left: 6px; border: 1px solid #39424f; background: linear-gradient(135deg, #9fadc0, #5f6e84); }
  `;

  render() {
    return html`<div class="bar">
      <button class="orb" aria-label="Start"><svg width="38" height="38" viewBox="0 0 38 38">
        <circle cx="19" cy="19" r="18" fill="#1c4a78" stroke="#20354f"/><ellipse cx="19" cy="30" rx="13" ry="7" fill="#1fb4ee"/>
        <ellipse cx="19" cy="10" rx="14" ry="8" fill="#a9c3dc" opacity=".6"/>
        <path d="M10 12Q14 8 18 11L16.500 18Q13 15.500 8.500 18Z" fill="#e2572b"/><path d="M19.500 12Q24 14 28.500 10.500L27 18Q22 20.500 18 18.500Z" fill="#8cc63c"/>
        <path d="M8 19.500Q12.500 17 16 19.500L14.500 26.500Q11 24 6.500 26Z" fill="#3e9de0"/><path d="M17.500 20Q22 22 26.500 19.500L25 26.500Q20 29 16 27Z" fill="#fbc52d"/></svg></button>
      <button class="pin" aria-label="Internet Explorer">${ie}</button>
      <button class="pin" aria-label="Explorer">${explorer}</button>
      <button class="pin" aria-label="Media Player">${wmp}</button>
      <div class="apps">
        <button class="app front stack" aria-label="Chrome">${chrome}</button>
        <button class="app stack" aria-label="Lync">${docIcon("L", "#8fd0f0", "#1c7fb8")}</button>
        <button class="app" aria-label="Notepad++">${notepad}</button>
        <button class="app" aria-label="Eclipse">${eclipse}</button>
        <button class="app" aria-label="Word">${docIcon("W", "#6fa3e0", "#1b4f9c")}</button>
        <button class="app" aria-label="Calculator">${calc}</button>
        <button class="app stack" aria-label="Outlook">${docIcon("O", "#fbc95b", "#d98a0b")}</button>
        <button class="app" aria-label="Paint">${paint}</button>
      </div>
      <div class="tray">${tray}<span class="clock">7:16 PM</span><button class="desk" aria-label="Show desktop"></button></div>
    </div>`;
  }
}

@customElement("app-root")
class AppRoot extends LitElement {
  static styles = css`
    :host { display: flex; flex-direction: column; height: 100vh; overflow: hidden; font: 12px/16px "Liberation Sans", Arial, sans-serif; }
    .body { flex: 1; min-height: 0; display: grid; grid-template-columns: 10px 229px 1fr 10px 17px; overflow: hidden; position: relative; }
    .body > * { min-height: 0; height: 100%; }
    .edge { background: linear-gradient(90deg, #1797c0 60%, #1487ad); }
    .scroll { display: flex; flex-direction: column; align-items: center; background: #f1f1f1; }
    .scroll svg { display: block; margin: 6px 0; }
    .track { flex: 1; width: 13px; display: grid; grid-template-rows: 123px 322px; }
    .thumb { grid-row: 2; background: #bcbcbc; border: 1px solid #a8a8a8; box-sizing: border-box; }
    .clip { overflow: hidden; }
    .body > .chat { position: absolute; right: 26px; bottom: 0; box-sizing: border-box; width: 122px; height: 33px; padding: 0 6px 0 9px; display: flex; align-items: center; gap: 6px;
      background: #e3f3ff; border: 2px solid #a3a9ad; border-bottom: 0; border-radius: 9px 9px 0 0; font: 700 12px/16px "Liberation Sans", Arial, sans-serif; color: #222; }
    .chat span { flex: 1; text-align: left; }
  `;

  render() {
    return html`
      <browser-chrome></browser-chrome>
      <div class="body">
        <div class="edge"></div>
        <setup-sidebar></setup-sidebar>
        <main class="clip"><object-detail></object-detail></main>
        <div class="edge"></div>
        <div class="scroll">
          <svg width="9" height="6"><path d="M0 5.500L4.500 0L9 5.500Z" fill="#505050"/></svg>
          <div class="track"><div class="thumb"></div></div>
          <svg width="9" height="6"><path d="M0 .5L4.500 6L9 .5Z" fill="#505050"/></svg>
        </div>
        <button class="chat">
          <svg width="16" height="16" viewBox="0 0 16 16" aria-hidden="true"><path d="M1 7Q1 3 7 3Q14 4 14 8Q14 11 12 12L13 15L8 12.500Q1 12.500 1 7Z" fill="#7cc4ee"/><circle cx="11" cy="4.500" r="4" fill="#35cf1d"/></svg>
          <span>Chat</span>
          <svg width="10" height="10" viewBox="0 0 10 10" aria-hidden="true"><path d="M1 9L8 2M3 1.500H8.500V7" fill="none" stroke="#8ccbe6" stroke-width="1.800"/></svg>
        </button>
      </div>
      <task-bar></task-bar>`;
  }
}
